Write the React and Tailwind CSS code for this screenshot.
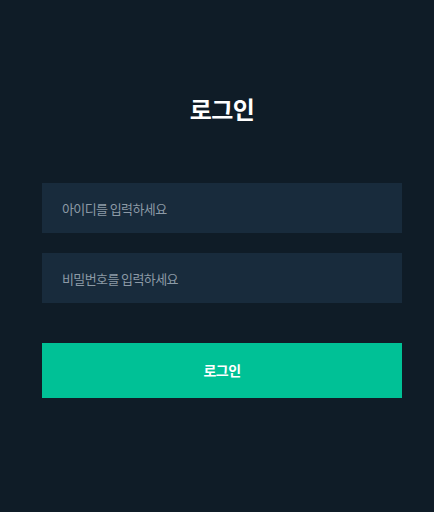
export default function App() {
  return (
    <div className="w-[434px] h-[512px] bg-[#0f1c27] flex flex-col items-center pl-[10px]" style={{ fontFamily: '"Noto Sans CJK KR", "Noto Sans", sans-serif' }}>
      <h1 className="mt-[91px] text-[24px] leading-[36px] font-bold text-white tracking-[-0.5px]">로그인</h1>
      <div className="mt-[56px] w-[360px] flex flex-col">
        <input
          type="text"
          placeholder="아이디를 입력하세요"
          className="h-[50px] w-full bg-[#182b3c] px-5 text-[13px] tracking-[-0.6px] text-white placeholder:text-[#8c9aa6] outline-none"
        />
        <input
          type="password"
          placeholder="비밀번호를 입력하세요"
          className="mt-[20px] h-[50px] w-full bg-[#182b3c] px-5 text-[13px] tracking-[-0.6px] text-white placeholder:text-[#8c9aa6] outline-none"
        />
        <button className="mt-[40px] h-[55px] w-full bg-[#00c196] text-white text-[14px] font-bold tracking-[-0.5px]">로그인</button>
      </div>
    </div>
  );
}
